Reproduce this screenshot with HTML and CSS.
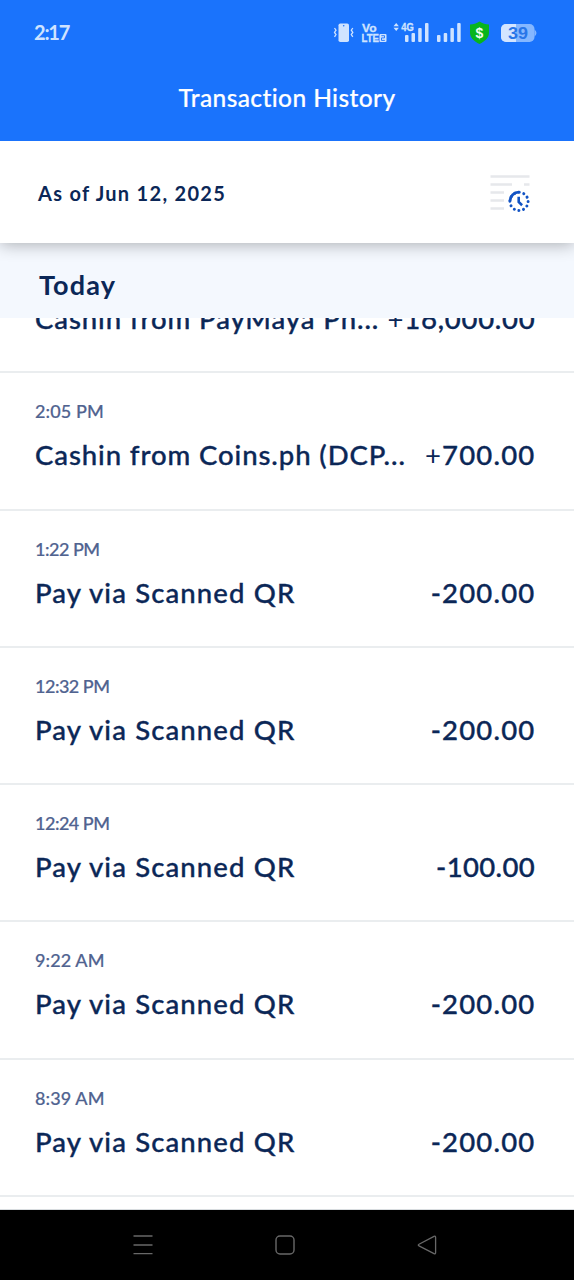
FILE: index.html
```
<!DOCTYPE html>
<html lang="en">
<head>
<meta charset="utf-8">
<title>Transaction History</title>
<link rel="stylesheet" href="styles.css">
</head>
<body>
<div class="screen">
  <header class="top">
    <div class="status">
      <span class="clock">2:17</span>
      <svg class="status-icons" width="210" height="28" viewBox="330 19 210 28" aria-hidden="true">
        <g fill="#cfe3ff">
          <rect x="338.5" y="23.500" width="10.500" height="18.500" rx="1.800"/>
          <path d="M334.500 28l1.500 2.200-1.500 2.200 1.500 2.200-1.500 2.200M352.800 28l-1.500 2.200 1.500 2.200-1.500 2.200 1.500 2.200" fill="none" stroke="#cfe3ff" stroke-width="1.300"/>
          <circle cx="343.700" cy="25.800" r=".8" fill="#1a73fc"/>
          <text class="tiny tiny-heavy" x="362" y="31.500" font-size="11" textLength="14.500" lengthAdjust="spacingAndGlyphs">Vo</text>
          <text class="tiny tiny-heavy" x="361.500" y="42" font-size="11" textLength="17.500" lengthAdjust="spacingAndGlyphs">LTE</text>
          <rect x="379.500" y="34" width="7" height="8" rx="1"/>
          <path d="M381.300 35.700h3.200v2.200h-3v2.500h3.300" fill="none" stroke="#1a73fc" stroke-width=".9"/>
          <path d="M393.500 26.200l2.700-3.200 2.700 3.200zM393.500 27.800l2.700 3.200 2.700-3.200z"/>
          <text class="tiny tiny-heavy" x="401.300" y="31" font-size="11" textLength="12.500" lengthAdjust="spacingAndGlyphs">4G</text>
          <rect x="405" y="35" width="3.500" height="7" rx="1"/>
          <rect x="411.500" y="33" width="3.500" height="9" rx="1"/>
          <rect x="418.200" y="28" width="3.500" height="14" rx="1"/>
          <rect x="425" y="23" width="3.500" height="19" rx="1"/>
          <rect x="437" y="35" width="3.500" height="7" rx="1"/>
          <rect x="443.700" y="33" width="3.500" height="9" rx="1"/>
          <rect x="450.400" y="28" width="3.500" height="14" rx="1"/>
          <rect x="457.200" y="23" width="3.500" height="19" rx="1"/>
        </g>
        <path d="M479.500 21.500c3 2 6 2.800 9.500 3v8c0 5.500-4 8.700-9.500 11.500-5.500-2.800-9.500-6-9.500-11.500v-8c3.500-.2 6.500-1 9.500-3z" fill="#08b51c"/>
        <text class="tiny" x="479.500" y="37.500" font-size="14" text-anchor="middle" fill="#f2fff2">$</text>
        <rect x="501" y="24" width="33.500" height="18" rx="5" fill="#85b7ff"/>
        <path d="M506 24h10v18h-10a5 5 0 0 1-5-5v-8a5 5 0 0 1 5-5z" fill="#d3e5ff"/>
        <path d="M534.500 29.500q4 3.500 0 7z" fill="#85b7ff"/>
        <text class="tiny" x="508" y="38.700" font-size="16.500" fill="#2876e8" textLength="20" lengthAdjust="spacingAndGlyphs">39</text>
      </svg>
    </div>
    <h1 class="title"><span>Transaction History</span></h1>
  </header>

  <section class="asof">
    <span class="asof-text">As of Jun 12, 2025</span>
    <svg class="filter" width="42" height="40" viewBox="490 174 42 40" aria-hidden="true">
      <path d="M490.500 176.500H529.500M490.500 184.500H512M524 184.500h5.500M490.500 192.500H504M490.500 200.500H504M490.500 208.500H504" stroke="#e6e8eb" stroke-width="2.600" fill="none"/>
      <path d="M510 201a9 9 0 0 1 9-8.900" stroke="#1253c4" stroke-width="2.800" fill="none"/>
      <circle cx="519" cy="201.400" r="9.100" fill="none" stroke="#1253c4" stroke-width="3" stroke-linecap="round" stroke-dasharray="0.010 4.755"/>
      <path d="M518.700 196.800v5.200l3.400 3.200" stroke="#1253c4" stroke-width="2.600" fill="none"/>
    </svg>
  </section>

  <h2 class="day">Today</h2>

  <main class="list">
    <article class="row row-clipped">
      <div class="line"><span class="name name-long">Cashin from PayMaya Ph...</span><span class="amount"><span class="plus">+</span>16,000.00</span></div>
    </article>
    <article class="row">
      <time class="time">2:05 PM</time>
      <div class="line"><span class="name name-long">Cashin from Coins.ph (DCP...</span><span class="amount"><span class="plus">+</span>700.00</span></div>
    </article>
    <article class="row">
      <time class="time time-narrow">1:22 PM</time>
      <div class="line"><span class="name">Pay via Scanned QR</span><span class="amount">-200.00</span></div>
    </article>
    <article class="row">
      <time class="time time-narrow">12:32 PM</time>
      <div class="line"><span class="name">Pay via Scanned QR</span><span class="amount">-200.00</span></div>
    </article>
    <article class="row">
      <time class="time time-narrow">12:24 PM</time>
      <div class="line"><span class="name">Pay via Scanned QR</span><span class="amount amount-narrow">-100.00</span></div>
    </article>
    <article class="row">
      <time class="time">9:22 AM</time>
      <div class="line"><span class="name">Pay via Scanned QR</span><span class="amount">-200.00</span></div>
    </article>
    <article class="row">
      <time class="time">8:39 AM</time>
      <div class="line"><span class="name">Pay via Scanned QR</span><span class="amount">-200.00</span></div>
    </article>
  </main>

  <nav class="nav">
    <svg width="20" height="20" viewBox="0 0 20 20"><path d="M.5 1h19M.5 10h19M.5 18.700h19" stroke="#686868" stroke-width="1.300"/></svg>
    <svg width="20" height="20" viewBox="0 0 20 20"><rect x="1" y="1" width="18" height="18" rx="4" fill="none" stroke="#686868" stroke-width="1.400"/></svg>
    <svg width="20" height="20" viewBox="0 0 20 20"><path d="M17 1.300Q18.600.6 18.600 2.500v15q0 1.900-1.600 1.100L2 10.800q-1.500-.8 0-1.600z" fill="none" stroke="#686868" stroke-width="1.300"/></svg>
  </nav>
</div>
</body>
</html>
```
FILE: styles.css
```
* { box-sizing: border-box; }
body { margin: 0; background: #fff; font-family: Lato, "Open Sans", sans-serif; color: #0b2757; font-variant-ligatures: none; }
h1, h2 { margin: 0; }
svg { display: block; }
.screen { display: flex; flex-direction: column; width: 574px; height: 1280px; overflow: hidden; }

.top { height: 141px; flex: none; background: #1a73fc; color: #fff; z-index: 3; }
.status { display: flex; justify-content: space-between; align-items: center; height: 66px; padding: 0 34px 0 34px; }
.clock { margin-top: -2px; font-size: 20px; font-weight: 700; color: #cfe3ff; letter-spacing: -1.200px; }
.tiny { font-family: "Liberation Sans", Arial, sans-serif; font-weight: 700; }
.tiny-heavy { stroke: #cfe3ff; stroke-width: .3px; }
.title { display: flex; justify-content: center; align-items: center; height: 62px; font-size: 24.500px; font-weight: 500; letter-spacing: .4px; -webkit-text-stroke: .2px currentColor; }

.asof { display: flex; flex: none; justify-content: space-between; align-items: center; height: 102px; padding: 4px 42px 0 38px; background: #fff; box-shadow: 0 1px 16px rgba(0, 0, 0, .32); z-index: 2; }
.asof-text { margin-top: -2px; font-size: 20px; font-weight: 700; letter-spacing: 1.300px; }

.day { display: flex; flex: none; align-items: center; height: 75px; padding: 8px 39px 0; background: #f4f8fe; font-size: 27px; font-weight: 700; letter-spacing: 1.150px; z-index: 1; }

.list { flex: 1; min-height: 0; overflow: hidden; border-bottom: 1px solid #d8dcdf; }
.row { display: flow-root; height: 137.250px; padding: 26px 39px 0 35px; border-bottom: 2px solid #eaedef; }
.time { display: block; height: 24px; line-height: 24px; font-size: 18px; font-weight: 500; color: #506390; letter-spacing: .1px; -webkit-text-stroke: .2px currentColor; }
.time-narrow { letter-spacing: -.5px; }
.line { display: flex; justify-content: space-between; height: 40px; margin-top: 12px; line-height: 40px; font-size: 27.500px; font-weight: 500; white-space: nowrap; -webkit-text-stroke: .35px currentColor; }
.name { letter-spacing: 1.130px; }
.name-long { letter-spacing: .920px; }
.amount { margin-right: -.5px; letter-spacing: 1.200px; }
.amount-narrow { letter-spacing: .35px; margin-right: 0; }
.plus { font-weight: 400; -webkit-text-stroke: 0; }

/* The first entry has scrolled partly under the day heading. */
.row-clipped { height: 55.250px; padding-top: 0; }
.row-clipped .line { margin-top: -19px; }
.row-clipped .amount { letter-spacing: .750px; }

.nav { display: flex; flex: none; justify-content: space-between; align-items: center; height: 70px; padding: 0 137px 0 133px; background: #000; }
```
